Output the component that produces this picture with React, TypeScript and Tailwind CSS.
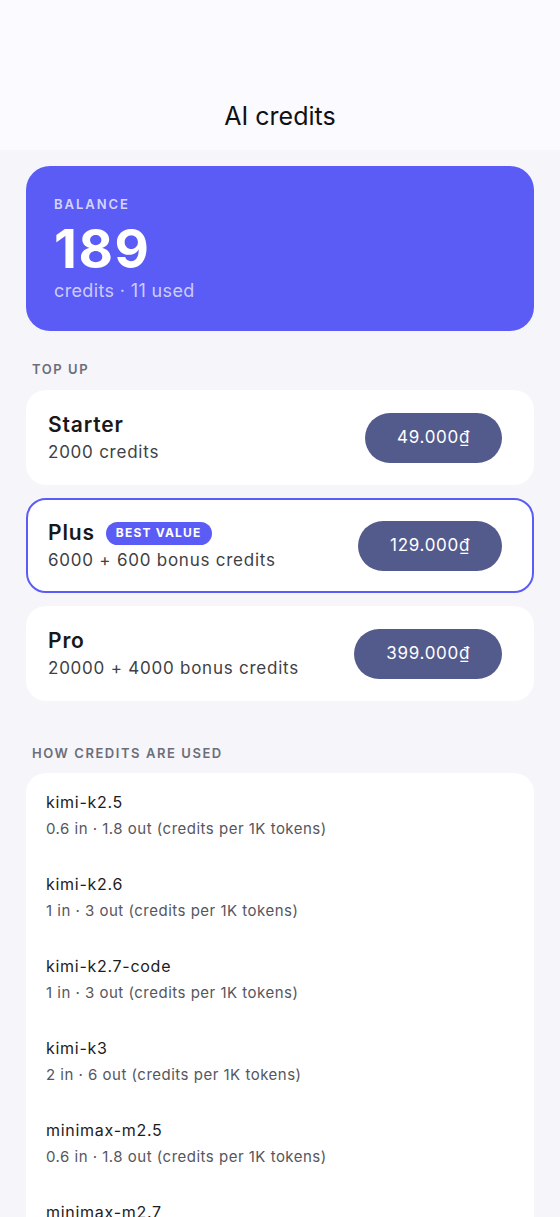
import React from 'react';

const plans = [
  { name: 'Starter', desc: '2000 credits', price: '49.000₫', best: false },
  { name: 'Plus', desc: '6000 + 600 bonus credits', price: '129.000₫', best: true },
  { name: 'Pro', desc: '20000 + 4000 bonus credits', price: '399.000₫', best: false },
];

const models = [
  { name: 'kimi-k2.5', rate: '0.6 in · 1.8 out (credits per 1K tokens)' },
  { name: 'kimi-k2.6', rate: '1 in · 3 out (credits per 1K tokens)' },
  { name: 'kimi-k2.7-code', rate: '1 in · 3 out (credits per 1K tokens)' },
  { name: 'kimi-k3', rate: '2 in · 6 out (credits per 1K tokens)' },
  { name: 'minimax-m2.5', rate: '0.6 in · 1.8 out (credits per 1K tokens)' },
  { name: 'minimax-m2.7', rate: '1 in · 3 out (credits per 1K tokens)' },
  { name: 'glm-5', rate: '1 in · 3 out (credits per 1K tokens)' },
];

export default function App() {
  return (
    <div className="min-h-screen bg-[#f5f5fa] font-['Inter',_'Noto_Sans',_sans-serif]">
      <header className="h-[150px] bg-[#fbfaff] flex items-end justify-center pb-[18px]">
        <h1 className="text-[25px] leading-[32px] text-[#111114]">AI credits</h1>
      </header>

      <main className="px-[26px] pt-4 pb-10">
        <section className="rounded-[24px] bg-[#5b5cf6] px-[28px] pt-[30px] pb-[28px] text-white">
          <div className="text-[13px] leading-[16px] font-semibold tracking-[0.15em] text-white/75">BALANCE</div>
          <div className="text-[53px] leading-[58px] font-bold tracking-[0.03em] mt-[8px]">189</div>
          <div className="text-[18px] leading-[24px] tracking-[0.02em] text-white/70 mt-[1px]">credits · 11 used</div>
        </section>

        <h2 className="mt-[30px] px-[6px] text-[13px] leading-[16px] font-semibold tracking-[0.12em] text-[#6b6e7b]">TOP UP</h2>

        <div className="mt-[13px] flex flex-col gap-[13px]">
          {plans.map(plan => (
            <div
              key={plan.name}
              className={
                plan.best
                  ? 'h-[95px] rounded-[20px] bg-white border-2 border-[#5b5cf6] flex items-center justify-between pl-[20px] pr-[30px]'
                  : 'h-[95px] rounded-[20px] bg-white flex items-center justify-between pl-[22px] pr-[32px]'
              }
            >
              <div>
                <div className="flex items-center gap-[11px]">
                  <span className="text-[21px] leading-[26px] font-semibold tracking-[0.04em] text-[#18181b]">{plan.name}</span>
                  {plan.best && (
                    <span className="rounded-full bg-[#5b5cf6] px-[10px] h-[23px] flex items-center text-[12px] font-bold tracking-[0.1em] text-white">
                      BEST VALUE
                    </span>
                  )}
                </div>
                <div className="text-[17px] leading-[22px] tracking-[0.045em] text-[#3f3f46] mt-[3px]">{plan.desc}</div>
              </div>
              <button className="h-[50px] rounded-full bg-[#535a8c] px-[32px] text-[17px] text-white tracking-[0.04em]">
                {plan.price}
              </button>
            </div>
          ))}
        </div>

        <h2 className="mt-[44px] px-[6px] text-[13px] leading-[16px] font-semibold tracking-[0.12em] text-[#6b6e7b]">HOW CREDITS ARE USED</h2>

        <div className="mt-[12px] rounded-[20px] bg-white px-[20px] pt-[1px]">
          {models.map(m => (
            <div key={m.name} className="py-[16px]">
              <div className="text-[16px] leading-[24px] tracking-[0.045em] text-[#1c1c1f]">{m.name}</div>
              <div className="text-[15px] leading-[22px] tracking-[0.033em] text-[#55565e] mt-[4px]">{m.rate}</div>
            </div>
          ))}
        </div>
      </main>
    </div>
  );
}
